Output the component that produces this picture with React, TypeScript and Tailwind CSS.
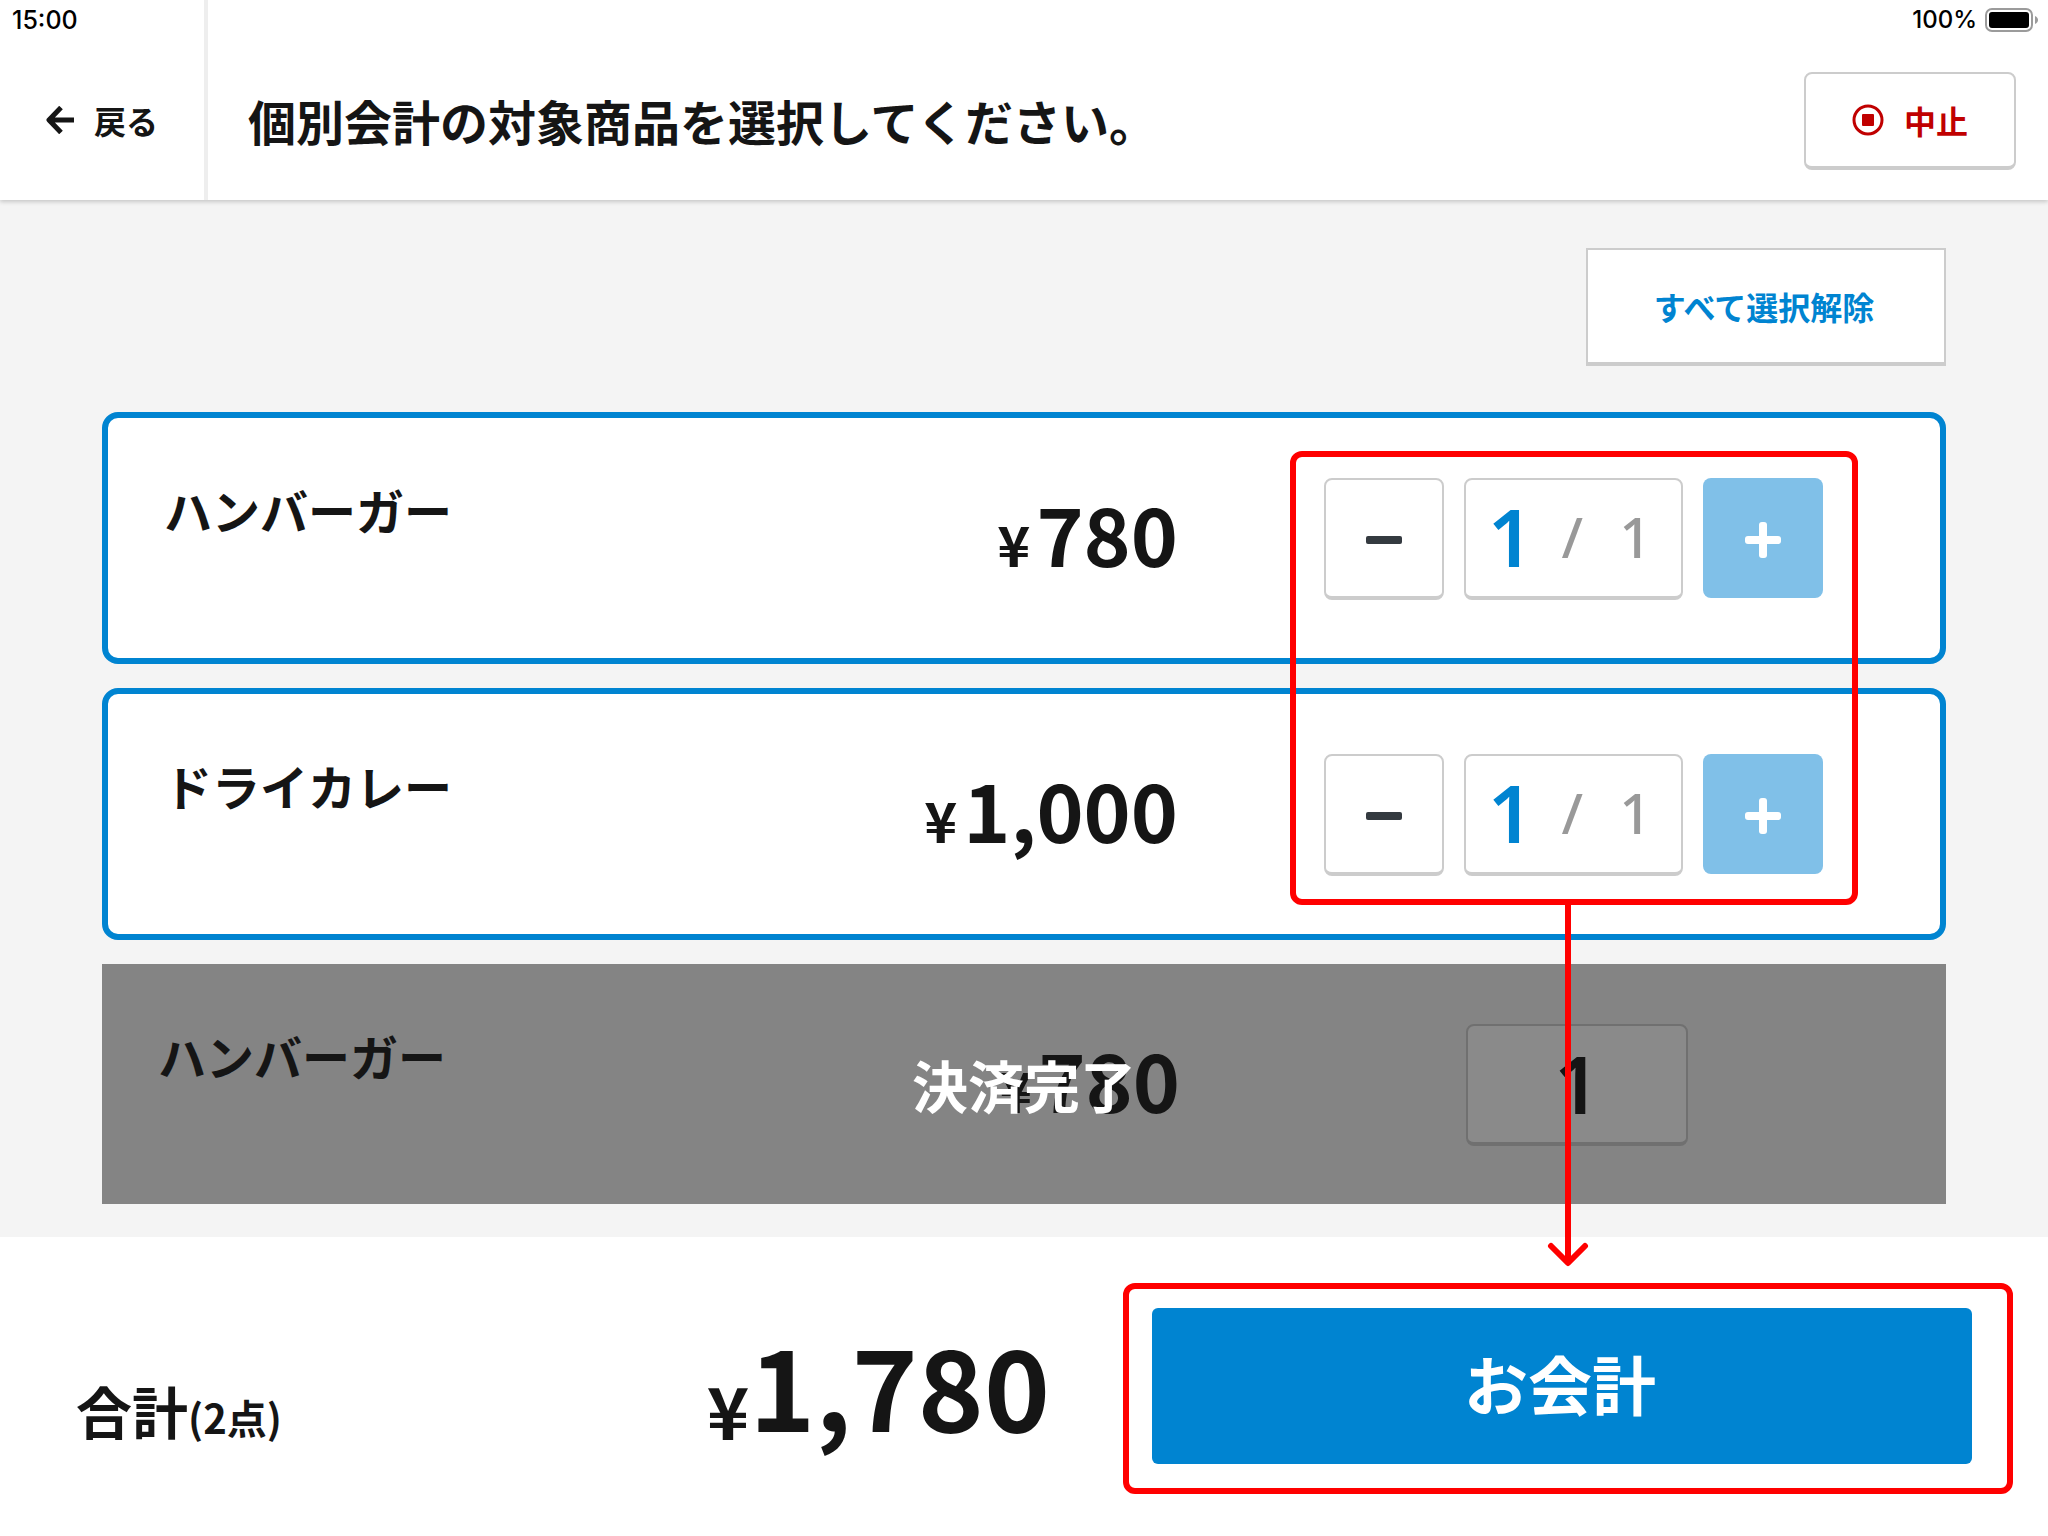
// src/pages/SplitBill.tsx
import { useState } from 'react';

type Item = {
  id: number;
  name: string;
  price: number;
  max: number;
  paid: boolean;
};

const ITEMS: Item[] = [
  { id: 1, name: 'ハンバーガー', price: 780, max: 1, paid: false },
  { id: 2, name: 'ドライカレー', price: 1000, max: 1, paid: false },
  { id: 3, name: 'ハンバーガー', price: 780, max: 1, paid: true },
];

const BatteryIcon = () => (
  <svg width="54" height="24" viewBox="0 0 54 24" aria-hidden="true">
    <rect x="1" y="1" width="46" height="22" rx="6" fill="none" stroke="#9b9b9b" strokeWidth="2" />
    <rect x="4" y="4" width="40" height="16" rx="3" fill="#000" />
    <path d="M50 8c4 1.5 4 6.5 0 8z" fill="#9b9b9b" />
  </svg>
);

const BackIcon = () => (
  <svg width="28" height="28" viewBox="0 0 28 28" fill="none" stroke="#151515" strokeWidth="5" aria-hidden="true">
    <path d="M15 1.500 3 14l12 12.500M3 14h25" strokeLinejoin="round" />
  </svg>
);

const StopIcon = () => (
  <svg width="32" height="32" viewBox="0 0 32 32" aria-hidden="true">
    <circle cx="16" cy="16" r="14" fill="none" stroke="#c00000" strokeWidth="3" />
    <rect x="10" y="10" width="12" height="12" rx="1" fill="#c00000" />
  </svg>
);

const MinusIcon = () => (
  <svg width="36" height="36" viewBox="0 0 36 36" fill="#343a40" aria-hidden="true">
    <rect x="0" y="14" width="36" height="8" rx="2" />
  </svg>
);

const PlusIcon = () => (
  <svg width="36" height="36" viewBox="0 0 36 36" fill="#fff" aria-hidden="true">
    <rect x="0" y="14" width="36" height="8" rx="3" />
    <rect x="14" y="0" width="8" height="36" rx="3" />
  </svg>
);

const Price = ({ value }: { value: number }) => (
  <p className="mr-[146px] flex items-baseline gap-1.5 text-[80px] leading-[108px]">
    <span className="text-[56px] leading-none">¥</span>
    <span>{value.toLocaleString('en-US')}</span>
  </p>
);

const App = () => {
  const [counts, setCounts] = useState<Record<number, number>>({ 1: 1, 2: 1 });

  const open = ITEMS.filter((item) => !item.paid);
  const total = open.reduce((sum, item) => sum + item.price * counts[item.id], 0);
  const points = open.reduce((sum, item) => sum + counts[item.id], 0);

  const change = (item: Item, diff: number) => {
    const next = Math.min(item.max, Math.max(0, counts[item.id] + diff));
    setCounts({ ...counts, [item.id]: next });
  };

  return (
    <div className="flex min-h-screen flex-col bg-[#f4f4f4] font-['Noto_Sans_CJK_JP',sans-serif] font-bold text-[#151515]">
      <header className="z-10 flex bg-white shadow-[0_2px_4px_rgba(0,0,0,0.18)]">
        <div className="flex w-[208px] flex-col border-r-4 border-[#eee]">
          <p className="h-10 pt-1 pl-3 font-['Inter',sans-serif] text-[25px] leading-8 font-medium text-black">15:00</p>
          <button type="button" className="flex h-40 items-center gap-5 pl-[46px] text-[32px]">
            <BackIcon />
            戻る
          </button>
        </div>
        <div className="flex flex-1 flex-col">
          <div className="flex h-10 items-start justify-end gap-2 pr-[9px] font-['Inter',sans-serif] text-2xl font-medium text-black">
            <p className="pt-1 leading-8">100%</p>
            <div className="pt-2">
              <BatteryIcon />
            </div>
          </div>
          <div className="flex h-40 items-center justify-between pr-8 pl-10">
            <h1 className="text-5xl">個別会計の対象商品を選択してください。</h1>
            <button
              type="button"
              className="mt-0.5 flex h-[98px] w-[212px] items-center justify-center gap-5 rounded-lg border-2 border-b-4 border-[#ccc] text-[32px] text-[#c00000]"
            >
              <StopIcon />
              中止
            </button>
          </div>
        </div>
      </header>

      <main className="flex-1 px-[102px] pt-12 pb-[33px]">
        <div className="flex justify-end">
          <button
            type="button"
            onClick={() => setCounts({ 1: 0, 2: 0 })}
            className="h-[118px] w-[360px] border-2 border-b-4 border-[#ccc] bg-white pr-1 text-[32px] text-[#0084d1]"
          >
            すべて選択解除
          </button>
        </div>

        <div className="relative mt-[46px]">
          <ul className="flex flex-col gap-6">
            {ITEMS.map((item) =>
              item.paid ? (
                <li key={item.id} className="relative flex h-60 items-start bg-[#848484] pt-[60px] pl-14">
                  <h2 className="flex-1 text-5xl leading-[62px]">{item.name}</h2>
                  <Price value={item.price} />
                  <div className="w-[620px] pl-[140px]">
                    <p className="flex h-[122px] w-[222px] items-center justify-center rounded-lg border-2 border-b-4 border-[#707070] bg-[#8a8a8a] pb-0.5 font-['Noto_Sans',sans-serif] text-[80px] leading-none font-semibold">
                      {item.max}
                    </p>
                  </div>
                  <p className="absolute inset-0 flex items-center justify-center text-[56px] text-white">決済完了</p>
                </li>
              ) : (
                <li
                  key={item.id}
                  className="flex h-[252px] items-start rounded-2xl border-6 border-[#0084d1] bg-white pt-[60px] pl-14"
                >
                  <h2 className="flex-1 text-5xl leading-[62px]">{item.name}</h2>
                  <Price value={item.price} />
                  <div className="flex w-[616px] gap-5">
                    <button
                      type="button"
                      aria-label="減らす"
                      onClick={() => change(item, -1)}
                      className="flex h-[122px] w-[120px] items-center justify-center rounded-lg border-2 border-b-4 border-[#ccc] pt-1"
                    >
                      <MinusIcon />
                    </button>
                    <p className="flex h-[122px] w-[219px] items-center justify-center rounded-lg border-2 border-b-4 border-[#ccc] pr-2 pb-1 font-['Noto_Sans',sans-serif] text-[56px] leading-none font-medium text-[#999]">
                      <span className="text-[80px] font-semibold text-[#0084d1]">{counts[item.id]}</span>
                      <span className="mr-9 ml-7">/</span>
                      <span>{item.max}</span>
                    </p>
                    <button
                      type="button"
                      aria-label="増やす"
                      onClick={() => change(item, 1)}
                      className="flex h-[120px] w-[120px] items-center justify-center rounded-lg bg-[#80c0e8] pt-1"
                    >
                      <PlusIcon />
                    </button>
                  </div>
                </li>
              ),
            )}
          </ul>

          {/* 数量エリアの強調枠とお会計ボタンへの矢印 */}
          <div className="pointer-events-none absolute top-[39px] right-[88px] h-[454px] w-[568px] rounded-xl border-6 border-[#f00]" />
          <svg
            className="pointer-events-none absolute top-[490px] right-[356px]"
            width="44"
            height="366"
            viewBox="0 0 44 366"
            fill="none"
            stroke="#f00"
            strokeWidth="6"
            strokeLinecap="round"
            aria-hidden="true"
          >
            <path d="M22 0v360M5 344l17 17 17-17" strokeLinejoin="round" />
          </svg>
        </div>
      </main>

      <footer className="flex h-[299px] items-start bg-white pr-[76px] pl-[76px]">
        <div className="flex flex-1 items-end justify-between pt-[84px]">
          <p className="text-[56px] leading-[70px]">
            合計<span className="text-[40px] leading-none">({points}点)</span>
          </p>
          <p className="mr-[102px] flex items-end text-[112px] leading-[124px]">
            <span className="text-[72px] leading-none">¥</span>
            <span>{total.toLocaleString('en-US')}</span>
          </p>
        </div>
        <div className="relative mt-[71px]">
          <button type="button" className="h-[156px] w-[820px] rounded-md bg-[#0084d1] pr-1 pb-2 text-[64px] text-white">
            お会計
          </button>
          <div className="pointer-events-none absolute -top-[25px] -right-[41px] -bottom-[30px] -left-[29px] rounded-xl border-6 border-[#f00]" />
        </div>
      </footer>
    </div>
  );
};

export default App;
